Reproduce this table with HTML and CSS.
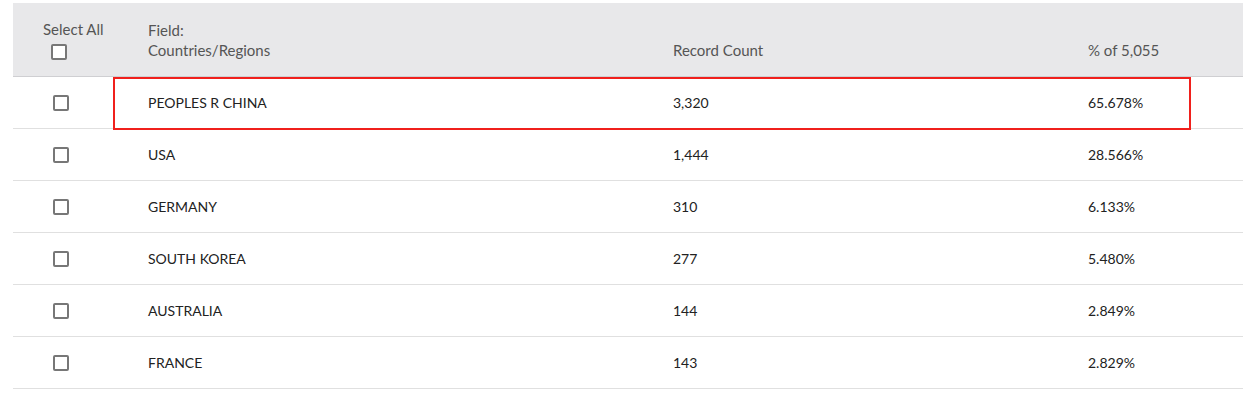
FILE: index.html
```html
<!DOCTYPE html>
<html lang="en">
<head>
<meta charset="utf-8">
<title>Countries/Regions</title>
<link rel="stylesheet" href="styles.css">
</head>
<body>
<div class="grid">
  <div class="row head">
    <div class="cell sel">
      <span class="sel-label">Select All</span>
      <span class="box head-box"></span>
    </div>
    <div class="cell htext">Field:<br>Countries/Regions</div>
    <div class="cell htext">Record Count</div>
    <div class="cell htext">% of 5,055</div>
    <div class="cell"></div>
  </div>
  <div class="row">
    <div class="cell chk"><span class="box"></span></div>
    <div class="cell name">PEOPLES R CHINA</div>
    <div class="cell">3,320</div>
    <div class="cell">65.678%</div>
    <div class="cell"></div>
    <div class="highlight"></div>
  </div>
  <div class="row">
    <div class="cell chk"><span class="box"></span></div>
    <div class="cell name">USA</div>
    <div class="cell">1,444</div>
    <div class="cell">28.566%</div>
    <div class="cell"></div>
  </div>
  <div class="row">
    <div class="cell chk"><span class="box"></span></div>
    <div class="cell name">GERMANY</div>
    <div class="cell">310</div>
    <div class="cell">6.133%</div>
    <div class="cell"></div>
  </div>
  <div class="row">
    <div class="cell chk"><span class="box"></span></div>
    <div class="cell name">SOUTH KOREA</div>
    <div class="cell">277</div>
    <div class="cell">5.480%</div>
    <div class="cell"></div>
  </div>
  <div class="row">
    <div class="cell chk"><span class="box"></span></div>
    <div class="cell name">AUSTRALIA</div>
    <div class="cell">144</div>
    <div class="cell">2.849%</div>
    <div class="cell"></div>
  </div>
  <div class="row">
    <div class="cell chk"><span class="box"></span></div>
    <div class="cell name">FRANCE</div>
    <div class="cell">143</div>
    <div class="cell">2.829%</div>
    <div class="cell"></div>
  </div>
</div>
</body>
</html>
```

FILE: styles.css
```css
html, body {
  margin: 0;
  padding: 0;
  background: #ffffff;
}
body {
  font-family: "Lato", "Open Sans", "Liberation Sans", sans-serif;
  font-size: 14px;
  color: #222222;
  overflow: hidden;
}
.grid {
  margin: 3px 0 0 13px;
  width: 1240px;
}
.row {
  position: relative;
  display: grid;
  grid-template-columns: 100px 525px 415px 137px 1fr;
  height: 51px;
  border-bottom: 1px solid #e0e0e0;
  align-items: center;
}
.cell {
  padding-left: 35px;
  line-height: 20px;
  white-space: nowrap;
}
.row.head {
  height: 73px;
  background: #e8e8ea;
  border-bottom: 1px solid #cfcfd2;
  align-items: end;
  font-size: 15px;
}
.row.head .cell {
  padding-bottom: 16px;
}
.htext {
  color: #555555;
}
.cell.sel {
  padding-left: 30px;
  display: flex;
  flex-direction: column;
  align-items: flex-start;
  color: #555555;
}
.sel-label {
  line-height: 18px;
}
.box {
  display: block;
  width: 12px;
  height: 12px;
  border: 2px solid #777777;
  border-radius: 2px;
  background: #ffffff;
}
.head-box {
  margin: 6px 0 0 8px;
}
.cell.chk {
  padding-left: 40px;
}
.highlight {
  position: absolute;
  left: 100px;
  top: 0;
  width: 1074px;
  height: 49px;
  border: 2px solid #f0201c;
  pointer-events: none;
}
```
